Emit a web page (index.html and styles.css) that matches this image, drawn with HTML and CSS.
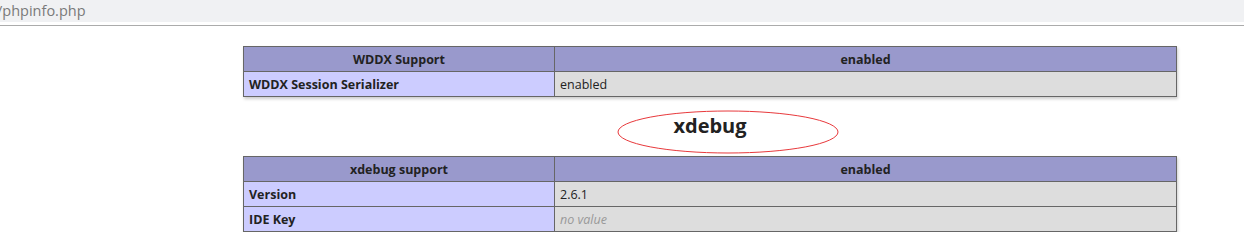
FILE: index.html
```html
<!DOCTYPE html>
<html>
<head>
<meta charset="utf-8">
<link rel="stylesheet" href="styles.css">
</head>
<body>
<div class="addr"><span class="url">/phpinfo.php</span></div>
<div class="addr-gap"></div>
<div class="page">
  <table>
    <tr class="h"><th>WDDX Support</th><th>enabled</th></tr>
    <tr><td class="e">WDDX Session Serializer</td><td class="v">enabled</td></tr>
  </table>
  <h2>xdebug
    <svg class="mark" width="222" height="44" viewBox="0 0 222 44"><ellipse cx="111" cy="22" rx="110" ry="21" fill="none" stroke="#e8393c" stroke-width="1"/></svg>
  </h2>
  <table>
    <tr class="h"><th>xdebug support</th><th>enabled</th></tr>
    <tr><td class="e">Version</td><td class="v">2.6.1</td></tr>
    <tr><td class="e">IDE Key</td><td class="v"><i>no value</i></td></tr>
  </table>
</div>
</body>
</html>
```
FILE: styles.css
```css
html, body {
  margin: 0;
  padding: 0;
  background: #fff;
}
body {
  color: #222;
  font-family: "Open Sans", "Liberation Sans", sans-serif;
}
.addr {
  height: 22px;
  background: #f0f1f3;
  overflow: hidden;
}
.url {
  display: block;
  margin-left: -3px;
  font-size: 14.5px;
  line-height: 21px;
  color: #7a7a7a;
}
.addr-gap {
  height: 3px;
  border-bottom: 1px solid #ababab;
}
.page {
  width: 934px;
  margin-left: 243px;
  padding-top: 20px;
}
table {
  border-collapse: collapse;
  border: 0;
  width: 934px;
  box-shadow: 1px 2px 3px #ccc;
}
th, td {
  border: 1px solid #666;
  font-size: 12.5px;
  line-height: 16px;
  padding: 5px 5px 3px;
  vertical-align: baseline;
  text-align: left;
}
.h {
  background: #99c;
  font-weight: bold;
}
.h th {
  text-align: center;
}
.h th:first-child {
  width: 300px;
}
.e {
  background: #ccf;
  width: 300px;
  font-weight: bold;
}
.v {
  background: #ddd;
}
.v i {
  color: #999;
}
h2 {
  position: relative;
  margin: 16px 0 17px;
  font-size: 20px;
  line-height: 26px;
  text-align: center;
  font-weight: bold;
}
.mark {
  position: absolute;
  left: 374px;
  top: -3px;
}
```
